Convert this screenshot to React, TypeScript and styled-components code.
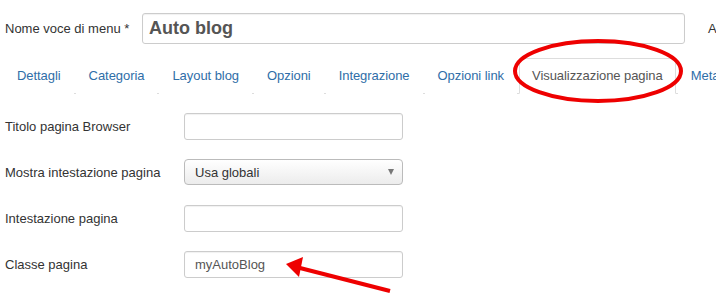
import React from 'react';
import styled, { createGlobalStyle } from 'styled-components';

const GlobalStyle = createGlobalStyle`
  html, body {
    margin: 0;
    padding: 0;
    background: #ffffff;
  }
  body {
    font-family: 'Liberation Sans', Arial, sans-serif;
    font-size: 13px;
    color: #333333;
    overflow: hidden;
  }
`;

const Page = styled.div`
  position: relative;
  width: 716px;
  height: 305px;
  overflow: hidden;
`;

const TitleRow = styled.div`
  display: flex;
  align-items: center;
  padding-top: 13px;
  padding-left: 5px;
  white-space: nowrap;
  overflow: hidden;
`;

const TitleLabel = styled.label`
  flex-shrink: 0;
  width: 137px;
  font-size: 13px;
  color: #333;
`;

const BigInput = styled.div`
  flex-shrink: 0;
  box-sizing: border-box;
  width: 543px;
  height: 31px;
  border: 1px solid #cccccc;
  border-radius: 3px;
  padding: 0 6px;
  display: flex;
  align-items: center;
  font-size: 18px;
  font-weight: bold;
  color: #555555;
  box-shadow: inset 0 1px 1px rgba(0, 0, 0, 0.06);
`;

const AliasLabel = styled.span`
  flex-shrink: 0;
  margin-left: 23px;
  color: #333;
`;

const Tabs = styled.ul`
  display: flex;
  flex-wrap: nowrap;
  list-style: none;
  margin: 14px 0 0 4px;
  padding: 0;
  border-bottom: 1px solid #dddddd;
  white-space: nowrap;
  letter-spacing: -0.06px;
`;

const Tab = styled.li<{ $active?: boolean }>`
  margin: 0 2px -1px 0;
  padding: 8px 12px;
  line-height: 18px;
  border: 1px solid ${(p) => (p.$active ? '#dddddd' : 'transparent')};
  border-bottom-color: ${(p) => (p.$active ? '#ffffff' : 'transparent')};
  border-radius: 4px 4px 0 0;
  background: #ffffff;
  color: ${(p) => (p.$active ? '#555555' : '#2f6ea8')};
  flex-shrink: 0;
`;

const Form = styled.div`
  padding: 18px 0 0 5px;
`;

const Group = styled.div`
  display: flex;
  align-items: center;
  height: 28px;
  margin-bottom: 18px;
`;

const FieldLabel = styled.label`
  width: 179px;
  color: #333;
`;

const TextInput = styled.div`
  box-sizing: border-box;
  width: 219px;
  height: 27px;
  border: 1px solid #cccccc;
  border-radius: 3px;
  padding: 0 10px;
  display: flex;
  align-items: center;
  color: #555555;
  box-shadow: inset 0 1px 1px rgba(0, 0, 0, 0.06);
`;

const Select = styled.div`
  box-sizing: border-box;
  width: 219px;
  height: 26px;
  border: 1px solid #bbbbbb;
  border-radius: 4px;
  padding: 0 8px 0 10px;
  display: flex;
  align-items: center;
  justify-content: space-between;
  color: #333;
  background: linear-gradient(#ffffff, #ececec);
`;

const Caret = styled.span`
  width: 0;
  height: 0;
  border-left: 3.5px solid transparent;
  border-right: 3.5px solid transparent;
  border-top: 6px solid #777777;
`;

const Annotations = styled.svg`
  position: absolute;
  left: 0;
  top: 0;
  pointer-events: none;
`;

const tabs = [
  'Dettagli',
  'Categoria',
  'Layout blog',
  'Opzioni',
  'Integrazione',
  'Opzioni link',
  'Visualizzazione pagina',
  'Metadati',
];

const App: React.FC = () => {
  return (
    <Page>
      <GlobalStyle />
      <TitleRow>
        <TitleLabel>Nome voce di menu *</TitleLabel>
        <BigInput>Auto blog</BigInput>
        <AliasLabel>Alias</AliasLabel>
      </TitleRow>
      <Tabs>
        {tabs.map((t) => (
          <Tab key={t} $active={t === 'Visualizzazione pagina'}>
            {t}
          </Tab>
        ))}
      </Tabs>
      <Form>
        <Group>
          <FieldLabel>Titolo pagina Browser</FieldLabel>
          <TextInput />
        </Group>
        <Group>
          <FieldLabel>Mostra intestazione pagina</FieldLabel>
          <Select>
            Usa globali
            <Caret />
          </Select>
        </Group>
        <Group>
          <FieldLabel>Intestazione pagina</FieldLabel>
          <TextInput />
        </Group>
        <Group>
          <FieldLabel>Classe pagina</FieldLabel>
          <TextInput>myAutoBlog</TextInput>
        </Group>
      </Form>
      <Annotations width="716" height="305" viewBox="0 0 716 305">
        <ellipse cx="598" cy="71" rx="83" ry="30" fill="none" stroke="#ee0000" strokeWidth="4" />
        <line x1="390" y1="291" x2="300" y2="268" stroke="#ee0000" strokeWidth="4" />
        <polygon points="286,264 303,257 299,277" fill="#ee0000" />
      </Annotations>
    </Page>
  );
};

export default App;
